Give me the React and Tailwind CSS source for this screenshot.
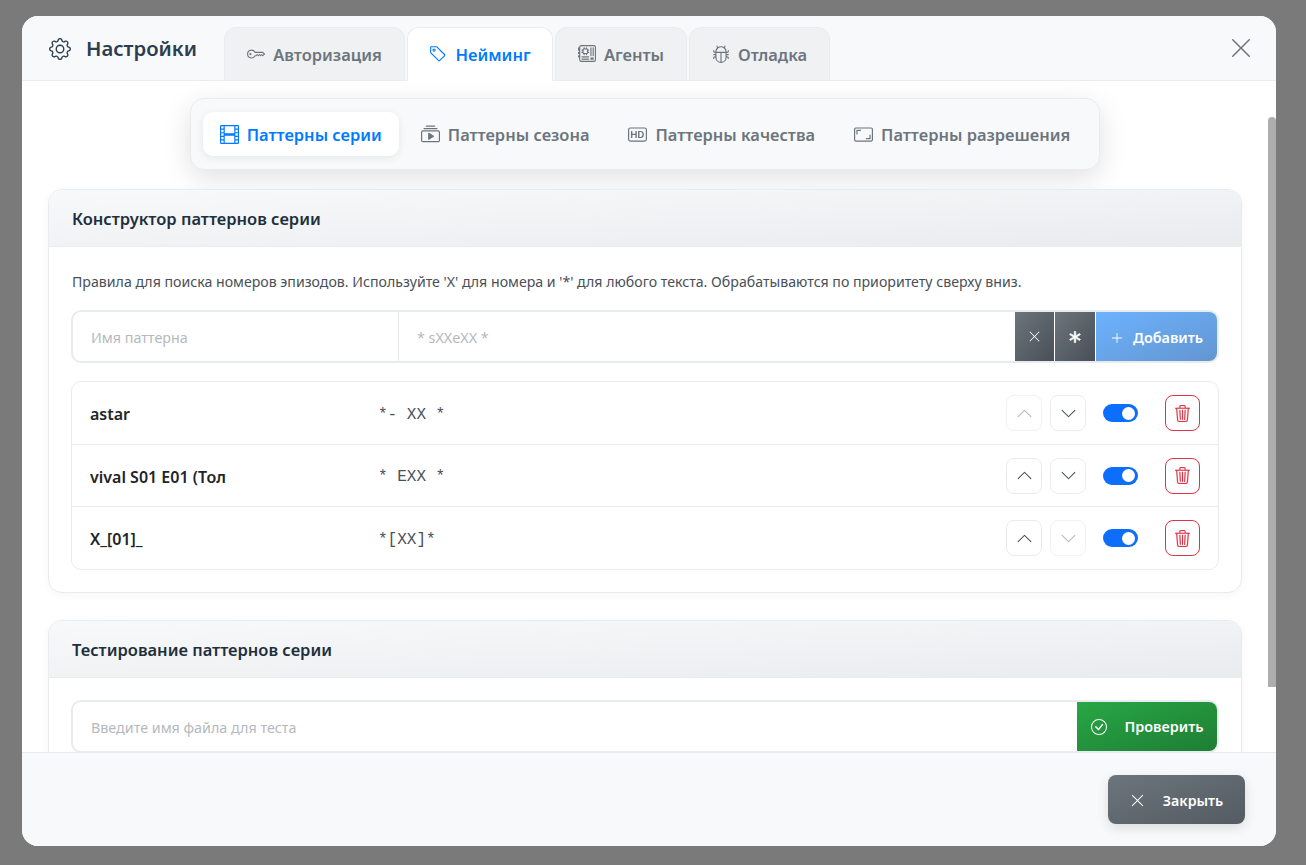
import {
  BsAspectRatio,
  BsAsterisk,
  BsBadgeHd,
  BsBug,
  BsCheckCircle,
  BsChevronDown,
  BsChevronUp,
  BsCollectionPlay,
  BsFilm,
  BsGear,
  BsKey,
  BsMotherboard,
  BsPlusLg,
  BsTag,
  BsTrash3,
  BsXLg,
} from "react-icons/bs";

const tabs = [
  { label: "Авторизация", icon: BsKey, width: "w-[181px]" },
  { label: "Нейминг", icon: BsTag, width: "w-[146px]", active: true },
  { label: "Агенты", icon: BsMotherboard, width: "w-[132px]" },
  { label: "Отладка", icon: BsBug, width: "w-[141px]" },
];

const subTabs = [
  { label: "Паттерны серии", icon: BsFilm, active: true },
  { label: "Паттерны сезона", icon: BsCollectionPlay },
  { label: "Паттерны качества", icon: BsBadgeHd },
  { label: "Паттерны разрешения", icon: BsAspectRatio },
];

const patterns = [
  { name: "astar", mask: "*- XX *", upOff: true },
  { name: "vival S01 E01 (Тол", mask: "* EXX *" },
  { name: "X_[01]_", mask: "*[XX]*", downOff: true },
];

const MoveButton = ({ icon: Icon, off }) => (
  <button
    className={`w-9 h-9 flex items-center justify-center rounded-lg border bg-white text-[17px] ${
      off ? "border-[#f1f2f4] text-[#b4b7ba]" : "border-[#e9ecef] text-[#495057]"
    }`}
  >
    <Icon />
  </button>
);

const Card = ({ title, children }) => (
  <section className="rounded-[14px] border border-[#e9ecef] bg-white shadow-[0_2px_10px_rgba(0,0,0,0.04)] overflow-hidden">
    <div className="h-[57px] flex items-center px-[23px] border-b border-[#e9ecef] bg-gradient-to-br from-[#f8f9fa] to-[#e9ecef]">
      <h3 className="pt-[2px] text-[16.5px] font-semibold text-[#212f3c]">{title}</h3>
    </div>
    {children}
  </section>
);

const App = () => {
  return (
    <div className="h-screen bg-[#7a7a7a] pl-[22px] pr-[30px] pt-4 pb-[19px] font-['Noto_Sans',sans-serif]">
      <div className="relative h-full flex flex-col rounded-2xl overflow-hidden bg-white">
        {/* Header with tabs */}
        <header className="h-[65px] shrink-0 flex items-end pl-[27px] pr-[23px] bg-[#f8f9fa] border-b border-[#e9ecef]">
          <div className="w-[175px] h-full flex items-center gap-[15px] pt-[1px]">
            <BsGear className="text-[22px] text-[#2c3e50]" />
            <span className="text-[20.3px] font-semibold text-[#2c3e50]">Настройки</span>
          </div>
          <nav className="flex gap-[2px] -mb-px">
            {tabs.map((tab) => (
              <div
                key={tab.label}
                className={`${tab.width} h-[54px] flex items-center justify-center gap-2 pt-[2px] rounded-t-xl border border-[#e9ecef] text-[16.5px] font-semibold ${
                  tab.active
                    ? "bg-white border-b-white text-[#007bff]"
                    : "bg-[#f0f1f3] text-[#6c757d]"
                }`}
              >
                <tab.icon className="text-[18px] -mt-[2px]" />
                <span>{tab.label}</span>
              </div>
            ))}
          </nav>
          <button className="ml-auto self-center text-[24px] text-[#6c757d]">
            <BsXLg />
          </button>
        </header>

        {/* Scrollable body */}
        <main className="flex-1 min-h-0 overflow-hidden pl-[26px] pr-[34px] pt-[17px]">
          <div className="w-fit mx-auto flex gap-[5px] py-[13px] px-[12px] rounded-[14px] border border-[#e9ecef] bg-[#f8f9fa] shadow-[0_8px_28px_rgba(0,0,0,0.12)]">
            {subTabs.map((tab) => (
              <div
                key={tab.label}
                className={`h-[44px] flex items-center gap-2 px-[17px] rounded-[10px] text-[16.45px] font-semibold ${
                  tab.active
                    ? "bg-white text-[#007bff] shadow-[0_2px_8px_rgba(0,0,0,0.08)]"
                    : "text-[#6c757d]"
                }`}
              >
                <tab.icon className="text-[19px]" />
                <span className="pt-[2px]">{tab.label}</span>
              </div>
            ))}
          </div>

          <div className="mt-[19px] flex flex-col gap-[27px]">
            <Card title="Конструктор паттернов серии">
              <div className="px-[22px] pt-[24px] pb-[22px]">
                <p className="pl-px text-[14.15px] leading-[21px] text-[#495057]">
                  Правила для поиска номеров эпизодов. Используйте 'X' для номера и '*' для любого текста. Обрабатываются по приоритету сверху вниз.
                </p>

                <div className="mt-[18px] h-[53px] flex rounded-[10px] border-2 border-[#e9ecef] overflow-hidden">
                  <input
                    placeholder="Имя паттерна"
                    className="w-[326px] px-[18px] pt-[2px] text-[14.3px] border-r border-[#e9ecef] outline-none placeholder:text-[#b5b9bd]"
                  />
                  <input
                    placeholder="* sXXeXX *"
                    className="flex-1 min-w-0 px-[18px] pt-[2px] text-[14.3px] outline-none placeholder:text-[#b5b9bd]"
                  />
                  <button className="w-[39px] flex items-center justify-center text-[13px] text-white bg-gradient-to-br from-[#6c757d] to-[#495057]">
                    <BsXLg />
                  </button>
                  <button className="w-[40px] ml-px flex items-center justify-center text-white bg-gradient-to-br from-[#6c757d] to-[#495057]">
                    <BsAsterisk className="text-[12px] stroke-[0.8px]" />
                  </button>
                  <button className="w-[121px] ml-px pt-[2px] flex items-center justify-center gap-[9px] text-[14.4px] font-semibold text-white bg-gradient-to-br from-[#6cb2ff] to-[#6396d0]">
                    <BsPlusLg className="text-[14px]" />
                    Добавить
                  </button>
                </div>

                <div className="mt-[18px] rounded-[10px] border border-[#e9ecef] divide-y divide-[#e9ecef]">
                  {patterns.map((p) => (
                    <div key={p.name} className="h-[62px] first:h-[63px] flex items-center pl-[18px] pr-[18px]">
                      <div className="w-[288px] pt-[2px] text-[16px] font-semibold text-[#212529] truncate">{p.name}</div>
                      <div className="pt-[3px] font-['Liberation_Mono',monospace] text-[16px] whitespace-pre text-[#495057]">
                        {p.mask}
                      </div>
                      <div className="ml-auto flex items-center">
                        <div className="flex gap-2">
                          <MoveButton icon={BsChevronUp} off={p.upOff} />
                          <MoveButton icon={BsChevronDown} off={p.downOff} />
                        </div>
                        <div className="ml-[17px] w-[35px] h-[18px] flex items-center justify-end pr-[3px] rounded-full bg-[#0d6efd]">
                          <span className="w-[13px] h-[13px] rounded-full bg-white" />
                        </div>
                        <button className="ml-[27px] w-[35px] h-9 flex items-center justify-center rounded-lg border border-[#dc3545] text-[#dc3545]">
                          <BsTrash3 className="text-[17px] stroke-[0.15px]" />
                        </button>
                      </div>
                    </div>
                  ))}
                </div>
              </div>
            </Card>

            <Card title="Тестирование паттернов серии">
              <div className="px-[22px] pt-[22px] pb-[22px]">
                <div className="h-[53px] flex rounded-[10px] border-2 border-[#e9ecef] overflow-hidden">
                  <input
                    placeholder="Введите имя файла для теста"
                    className="flex-1 min-w-0 px-[18px] pt-[2px] text-[14.3px] outline-none placeholder:text-[#b5b9bd]"
                  />
                  <button className="w-[140px] flex items-center justify-center gap-[18px] text-[14.4px] font-semibold text-white bg-gradient-to-br from-[#28a745] to-[#1e7e34]">
                    <BsCheckCircle className="text-[16px]" />
                    Проверить
                  </button>
                </div>
              </div>
            </Card>
          </div>
        </main>

        {/* Scrollbar thumb */}
        <div className="absolute right-0 top-[101px] w-2 h-[570px] rounded-t-md bg-[#adadad]" />

        {/* Footer */}
        <footer className="h-[94px] shrink-0 flex items-center justify-end pr-[31px] bg-[#f8f9fa] border-t border-[#e9ecef]">
          <button className="w-[137px] h-[49px] pt-[2px] flex items-center justify-center gap-[18px] rounded-lg text-[14.2px] font-semibold text-white bg-gradient-to-br from-[#6c757d] to-[#545b62] shadow-[0_4px_12px_rgba(0,0,0,0.12)]">
            <BsXLg className="text-[15px]" />
            Закрыть
          </button>
        </footer>
      </div>
    </div>
  );
};

export default App;
